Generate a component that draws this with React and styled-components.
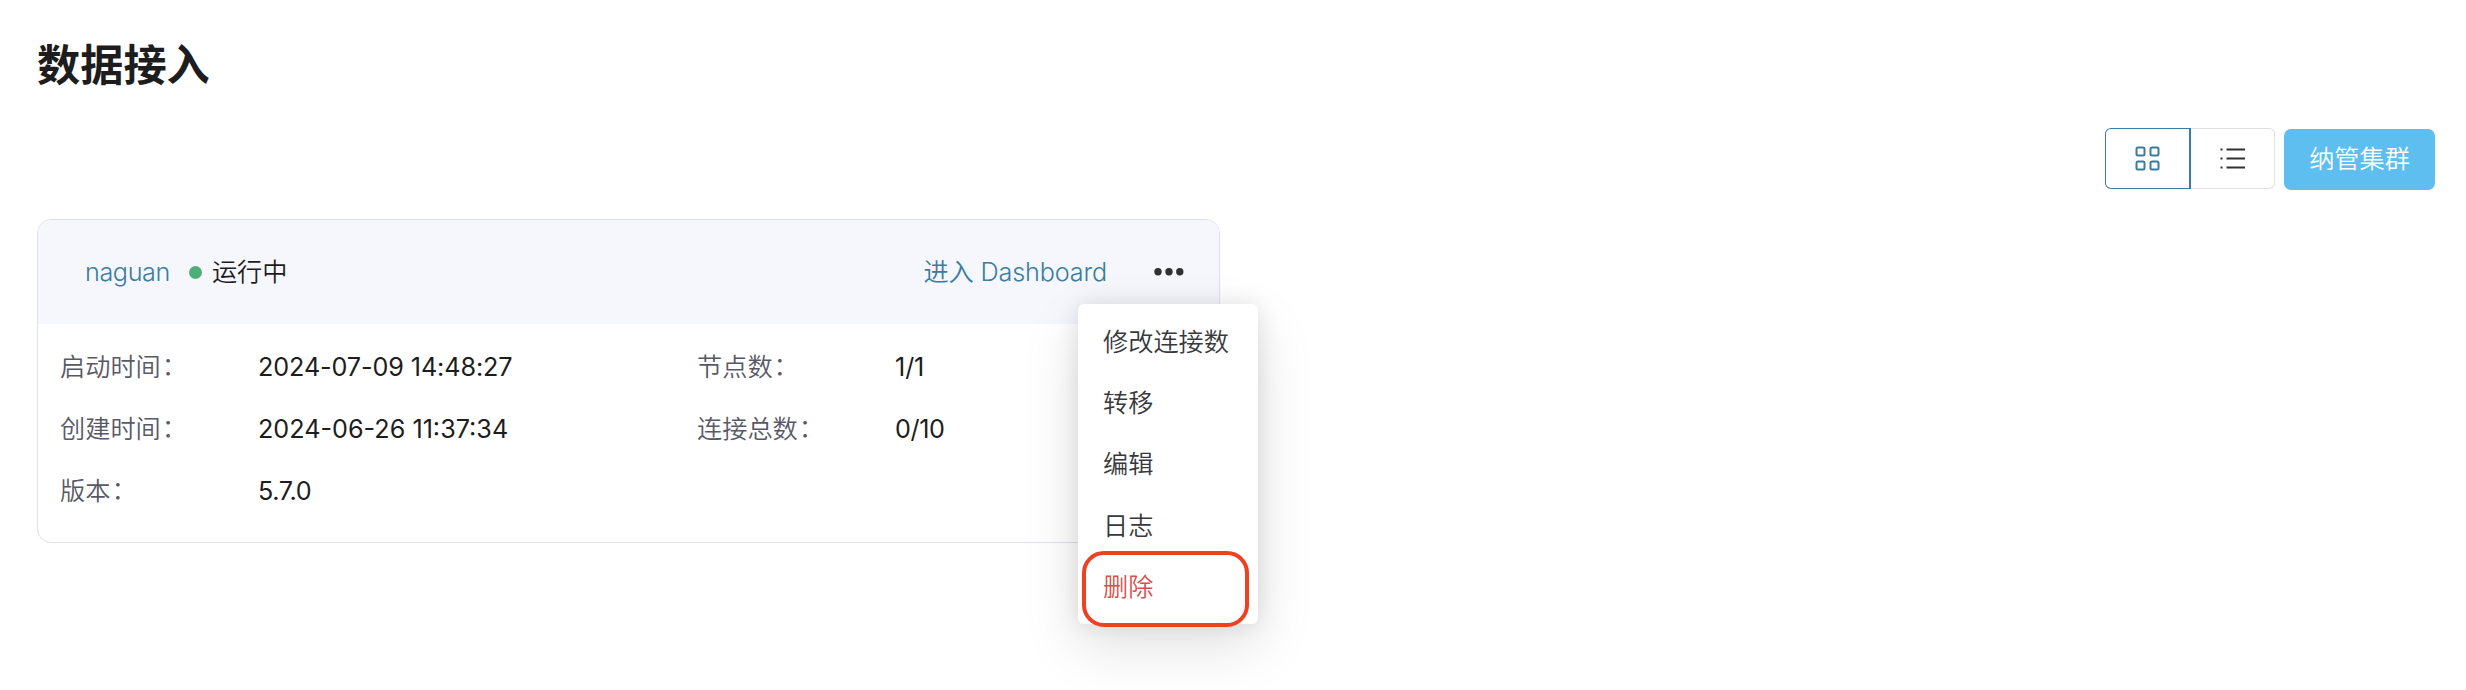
import React from 'react';
import styled, { createGlobalStyle } from 'styled-components';

const GlobalStyle = createGlobalStyle`
  * { box-sizing: border-box; }
  body {
    margin: 0;
    background: #fff;
    color: #1d1d1f;
    font-family: Inter, "Noto Sans CJK SC", sans-serif;
    font-size: 25.2px;
    font-weight: 350;
    line-height: 40px;
  }
  button { font: inherit; margin: 0; }
`;

const Page = styled.main`
  height: 690px;
  padding: 36px 31px 0 37px;
  overflow: hidden;
`;

const Title = styled.h1`
  margin: 0;
  font-size: 43.2px;
  line-height: 58px;
  font-weight: 600;
  color: #1d1d1d;
`;

const Toolbar = styled.div`
  display: flex;
  justify-content: flex-end;
  margin-top: 34px;
`;

const ViewSwitch = styled.div`
  display: flex;
  margin-right: 9px;
`;

const ViewButton = styled.button`
  display: flex;
  align-items: center;
  justify-content: center;
  width: ${(p) => (p.$active ? 86 : 84)}px;
  height: 61px;
  padding: 0;
  background: #fff;
  color: ${(p) => (p.$active ? '#3a7da2' : '#303133')};
  border: 1px solid ${(p) => (p.$active ? '#3a7da2' : '#dedfe1')};
  border-width: ${(p) => (p.$active ? '1px 2px 1px 1px' : '1px 1px 1px 0')};
  border-radius: ${(p) => (p.$active ? '6px 0 0 6px' : '0 6px 6px 0')};
`;

const PrimaryButton = styled.button`
  width: 151px;
  height: 61px;
  margin-top: 1px;
  padding: 0 0 1px;
  border: 0;
  border-radius: 7px;
  background: #5ebef0;
  color: #fff;
`;

const Card = styled.section`
  position: relative;
  width: 1183px;
  height: 324px;
  margin-top: 29px;
  border: 1px solid #dfe0e9;
  border-radius: 14px;
`;

const CardHeader = styled.header`
  display: flex;
  align-items: center;
  height: 104px;
  padding: 0 35px 0 47px;
  background: #f6f7fd;
  border-radius: 13px 13px 0 0;
`;

const Link = styled.a`
  color: #3a7da2;
  letter-spacing: ${(p) => p.$spacing || 0}px;
`;

const StatusDot = styled.i`
  width: 13px;
  height: 13px;
  margin: 0 10px 0 19px;
  border-radius: 50%;
  background: #50ad78;
`;

const Actions = styled.div`
  display: flex;
  align-items: center;
  gap: 47px;
  margin-left: auto;
`;

const Details = styled.dl`
  display: grid;
  grid-template-columns: 198px 439px 198px 1fr;
  grid-auto-rows: 62px;
  align-items: center;
  margin: 0;
  padding: 12px 0 0 22px;
`;

const Label = styled.dt`
  color: #585966;
`;

const Colon = styled.span`
  display: inline-block;
  line-height: 1;
  margin-left: 1px;
  vertical-align: 1px;
`;

const Value = styled.dd`
  margin: 0;
  font-weight: 400;
  color: #1d1d1d;
  letter-spacing: ${(p) => p.$spacing || 0}px;
`;

const Menu = styled.ul`
  position: absolute;
  top: 84px;
  left: 1040px;
  width: 180px;
  margin: 0;
  padding: 7px 0;
  list-style: none;
  background: #fff;
  border-radius: 6px;
  box-shadow: 0 22px 58px rgba(0, 0, 0, 0.12), 0 0 22px rgba(0, 0, 0, 0.1);
`;

const MenuItem = styled.li`
  position: relative;
  height: 61.2px;
  padding-left: 25px;
  line-height: 63.6px;
  color: ${(p) => (p.$danger ? '#d4504c' : '#38393d')};
`;

const Highlight = styled.span`
  position: absolute;
  top: -5px;
  left: 4px;
  width: 167px;
  height: 76px;
  border: 4px solid #ee4023;
  border-radius: 22px;
`;

const GridIcon = () => (
  <svg width="26" height="26" viewBox="0 0 26 26" fill="none" stroke="currentColor" strokeWidth="2">
    <rect x="1.5" y="1.5" width="8" height="8" rx="1.5" />
    <rect x="15.5" y="1.5" width="8" height="8" rx="1.5" />
    <rect x="1.5" y="15.5" width="8" height="8" rx="1.5" />
    <rect x="15.5" y="15.5" width="8" height="8" rx="1.5" />
  </svg>
);

const ListIcon = () => (
  <svg width="26" height="26" viewBox="0 0 26 26" fill="currentColor">
    {[2.5, 11.5, 20.5].map((y) => (
      <g key={y}>
        <rect x="0.5" y={y} width="2" height="2" />
        <rect x="6.5" y={y} width="18.5" height="2" />
      </g>
    ))}
  </svg>
);

const MoreIcon = () => (
  <svg width="30" height="8" viewBox="0 0 30 8" fill="#303133">
    <circle cx="4" cy="3.7" r="3.7" />
    <circle cx="15" cy="3.7" r="3.7" />
    <circle cx="25.8" cy="3.7" r="3.7" />
  </svg>
);

const details = [
  ['启动时间', '2024-07-09 14:48:27', -0.1],
  ['节点数', '1/1', -0.1],
  ['创建时间', '2024-06-26 11:37:34', 0],
  ['连接总数', '0/10', -0.4],
  ['版本', '5.7.0', -0.4],
];

const menuItems = ['修改连接数', '转移', '编辑', '日志'];

export default function App() {
  return (
    <Page>
      <GlobalStyle />
      <Title>数据接入</Title>
      <Toolbar>
        <ViewSwitch>
          <ViewButton $active><GridIcon /></ViewButton>
          <ViewButton><ListIcon /></ViewButton>
        </ViewSwitch>
        <PrimaryButton>纳管集群</PrimaryButton>
      </Toolbar>
      <Card>
        <CardHeader>
          <Link $spacing={-0.4}>naguan</Link>
          <StatusDot />
          <span>运行中</span>
          <Actions>
            <Link $spacing={-0.15}>进入 Dashboard</Link>
            <MoreIcon />
          </Actions>
        </CardHeader>
        <Details>
          {details.map(([label, value, spacing]) => (
            <React.Fragment key={label}>
              <Label>{label}<Colon>：</Colon></Label>
              <Value $spacing={spacing}>{value}</Value>
            </React.Fragment>
          ))}
        </Details>
        <Menu>
          {menuItems.map((item) => <MenuItem key={item}>{item}</MenuItem>)}
          <MenuItem $danger>删除<Highlight /></MenuItem>
        </Menu>
      </Card>
    </Page>
  );
}
